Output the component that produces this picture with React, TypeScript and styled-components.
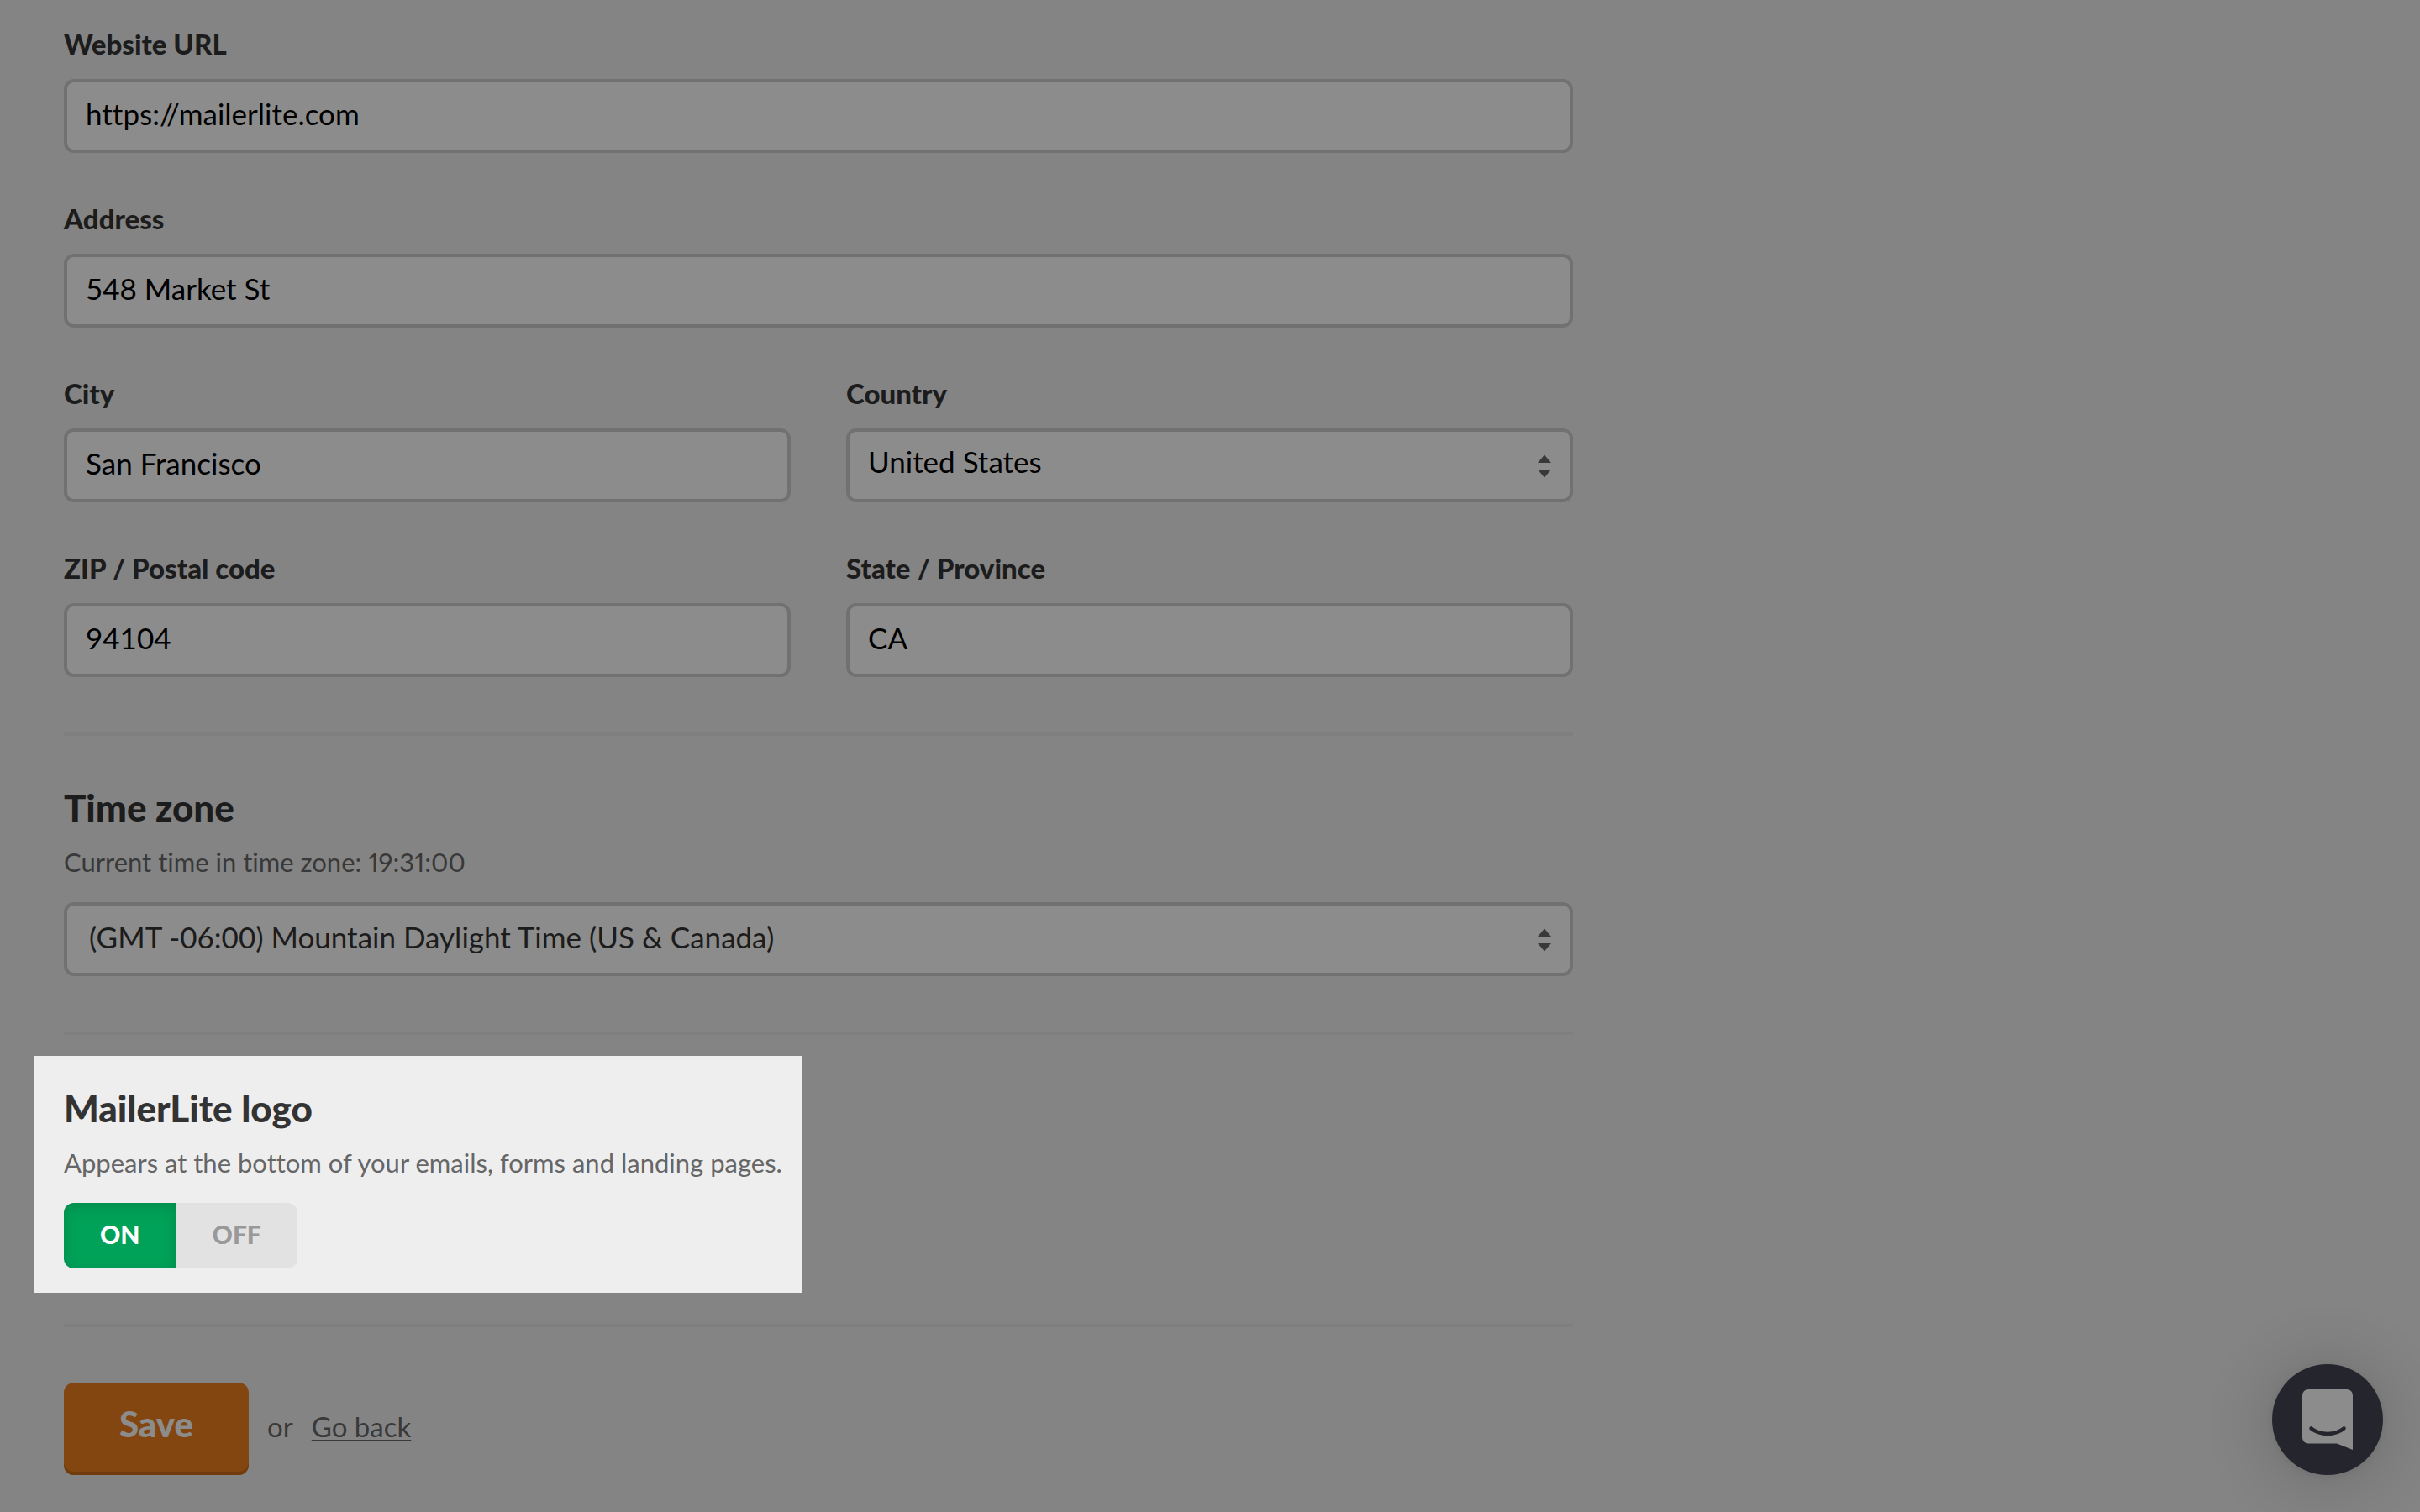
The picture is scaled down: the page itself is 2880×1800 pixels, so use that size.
import React, { useState } from "react";
import styled, { createGlobalStyle, ThemeProvider } from "styled-components";

const theme = {
  page: "#848484",
  field: "#8c8c8c",
  fieldBorder: "#717171",
  divider: "#7f7f7f",
  heading: "#1c1c1c",
  muted: "#393939",
  accent: "#844610",
  accentEdge: "#703b0d",
};

const GlobalStyle = createGlobalStyle`
  *, *::before, *::after { box-sizing: border-box; }
  body {
    margin: 0;
    background: ${theme.page};
    font-family: Lato, "Liberation Sans", sans-serif;
    font-size: 33px;
    line-height: 40px;
    color: ${theme.heading};
    font-variant-ligatures: none;
    -webkit-font-smoothing: antialiased;
  }
`;

const Page = styled.main`
  padding: 32px 76px 44px;
`;

const Form = styled.form`
  max-width: 1796px;
`;

const Fields = styled.div`
  display: grid;
  grid-template-columns: 1fr 1fr;
  gap: 58px 66px;
  padding-bottom: 66px;
`;

const FieldBox = styled.div<{ $wide?: boolean }>`
  display: flex;
  flex-direction: column;
  gap: 22px;
  min-width: 0;
  grid-column: ${(p) => (p.$wide ? "1 / -1" : "auto")};
`;

const Label = styled.label`
  font-weight: 900;
`;

const Input = styled.input`
  width: 100%;
  height: 88px;
  padding: 0 22px 6px;
  border: 4px solid ${(p) => p.theme.fieldBorder};
  border-radius: 12px;
  background: ${(p) => p.theme.field};
  color: #000;
  font: inherit;
  font-size: 35px;
  font-variant-ligatures: none;
  outline: none;
`;

const SelectWrap = styled.div`
  position: relative;
  display: flex;
`;

const SelectBox = styled(Input).attrs({ as: "select" })<{ $soft?: boolean }>`
  appearance: none;
  padding: ${(p) => (p.$soft ? "0 60px 6px 26px" : "0 60px 10px 22px")};
  color: ${(p) => (p.$soft ? p.theme.heading : "#000")};
`;

const SelectArrows = styled.svg`
  position: absolute;
  right: 26px;
  top: 50%;
  margin-top: -13px;
  width: 16px;
  height: 28px;
  fill: ${(p) => p.theme.muted};
  pointer-events: none;
`;

const Section = styled.section`
  padding: 58px 0 66px;
  border-top: 4px solid ${(p) => p.theme.divider};
`;

const LogoSection = styled(Section)`
  padding: 25px 0 37px;
`;

const Spotlight = styled.div`
  width: fit-content;
  margin-left: -36px;
  padding: 35px 24px 29px 36px;
  background: #eee;
`;

const Title = styled.h2<{ $bright?: boolean }>`
  margin: 0 0 18px;
  font-size: 44px;
  line-height: 54px;
  font-weight: 900;
  color: ${(p) => (p.$bright ? "#333" : p.theme.heading)};
`;

const Hint = styled.p<{ $bright?: boolean }>`
  margin: 0 0 28px;
  font-size: 31px;
  font-variant-numeric: proportional-nums;
  color: ${(p) => (p.$bright ? "#666" : p.theme.muted)};
`;

const Toggle = styled.div`
  display: inline-flex;
  vertical-align: top;
  border-radius: 12px;
  overflow: hidden;
  background: #e2e2e2;
`;

const ToggleOption = styled.label`
  height: 78px;
  padding: 0 43px 4px;
  display: flex;
  align-items: center;
  font-size: 30px;
  font-weight: 900;
  color: #999;
  cursor: pointer;

  &:has(input:checked) {
    background: #00a158;
    color: #fff;
    box-shadow: inset 0 4px 16px rgba(0, 0, 0, 0.15);
  }
`;

const HiddenRadio = styled.input`
  appearance: none;
  width: 0;
  height: 0;
  margin: 0;
`;

const Actions = styled.div`
  display: flex;
  align-items: baseline;
  gap: 22px;
  padding-top: 66px;
  border-top: 4px solid ${(p) => p.theme.divider};
  color: ${(p) => p.theme.muted};
`;

const SaveButton = styled.button`
  height: 110px;
  padding: 0 66px 12px;
  border: 0;
  border-radius: 12px;
  background: ${(p) => p.theme.accent};
  box-shadow: inset 0 -4px ${(p) => p.theme.accentEdge};
  color: ${(p) => p.theme.field};
  font: inherit;
  font-size: 42px;
  font-weight: 900;
`;

const BackLink = styled.a`
  color: inherit;
  text-decoration-thickness: 2px;
  text-underline-offset: 3px;
  text-decoration-skip-ink: none;
`;

const ChatButton = styled.button`
  position: fixed;
  right: 44px;
  bottom: 44px;
  width: 132px;
  height: 132px;
  padding: 0;
  border: 0;
  border-radius: 50%;
  display: grid;
  place-items: center;
  background: #25262d;
  box-shadow: 0 2px 12px rgba(0, 0, 0, 0.08), 0 4px 84px rgba(0, 0, 0, 0.2);
`;

type SelectProps = {
  id: string;
  value: string;
  options: string[];
  soft?: boolean;
  labelledBy?: string;
};

function Select({ id, value, options, soft, labelledBy }: SelectProps) {
  return (
    <SelectWrap>
      <SelectBox id={id} defaultValue={value} $soft={soft} aria-labelledby={labelledBy}>
        {options.map((o) => (
          <option key={o}>{o}</option>
        ))}
      </SelectBox>
      <SelectArrows viewBox="0 0 16 28" aria-hidden="true">
        <path d="M8 0.5 16 10H0ZM0 18H16L8 27.5Z" />
      </SelectArrows>
    </SelectWrap>
  );
}

type FieldProps = { id: string; label: string; value: string; wide?: boolean; options?: string[] };

function Field({ id, label, value, wide, options }: FieldProps) {
  return (
    <FieldBox $wide={wide}>
      <Label htmlFor={id}>{label}</Label>
      {options ? (
        <Select id={id} value={value} options={options} />
      ) : (
        <Input id={id} type="text" defaultValue={value} />
      )}
    </FieldBox>
  );
}

const timeZone = "(GMT -06:00) Mountain Daylight Time (US & Canada)";

export default function App() {
  const [logo, setLogo] = useState("ON");

  return (
    <ThemeProvider theme={theme}>
      <GlobalStyle />
      <Page>
        <Form onSubmit={(e) => e.preventDefault()}>
          <Fields>
            <Field id="website" label="Website URL" value="https://mailerlite.com" wide />
            <Field id="address" label="Address" value="548 Market St" wide />
            <Field id="city" label="City" value="San Francisco" />
            <Field id="country" label="Country" value="United States" options={["United States"]} />
            <Field id="zip" label="ZIP / Postal code" value="94104" />
            <Field id="state" label="State / Province" value="CA" />
          </Fields>

          <Section>
            <Title id="timezone-title">Time zone</Title>
            <Hint>Current time in time zone: 19:31:00</Hint>
            <Select id="timezone" value={timeZone} options={[timeZone]} soft labelledBy="timezone-title" />
          </Section>

          <LogoSection>
            <Spotlight>
              <Title id="logo-title" $bright>
                MailerLite logo
              </Title>
              <Hint $bright>Appears at the bottom of your emails, forms and landing pages.</Hint>
              <Toggle role="radiogroup" aria-labelledby="logo-title">
                {["ON", "OFF"].map((state) => (
                  <ToggleOption key={state}>
                    <HiddenRadio
                      type="radio"
                      name="logo"
                      value={state}
                      checked={logo === state}
                      onChange={() => setLogo(state)}
                    />
                    {state}
                  </ToggleOption>
                ))}
              </Toggle>
            </Spotlight>
          </LogoSection>

          <Actions>
            <SaveButton type="submit">Save</SaveButton>
            <span>or</span>
            <BackLink href="#">Go back</BackLink>
          </Actions>
        </Form>
      </Page>

      <ChatButton type="button" aria-label="Open chat">
        <svg width="60" height="72" viewBox="0 0 60 72" aria-hidden="true">
          <path d="M7 0H53A7 7 0 0 1 60 7V72L41 64.500H7A7 7 0 0 1 0 57.500V7A7 7 0 0 1 7 0Z" fill="#8c8c8c" />
          <path d="M10.500 46.500C21 55 39 55 49.500 46.500" fill="none" stroke="#25262d" strokeWidth="4.500" strokeLinecap="round" />
        </svg>
      </ChatButton>
    </ThemeProvider>
  );
}
